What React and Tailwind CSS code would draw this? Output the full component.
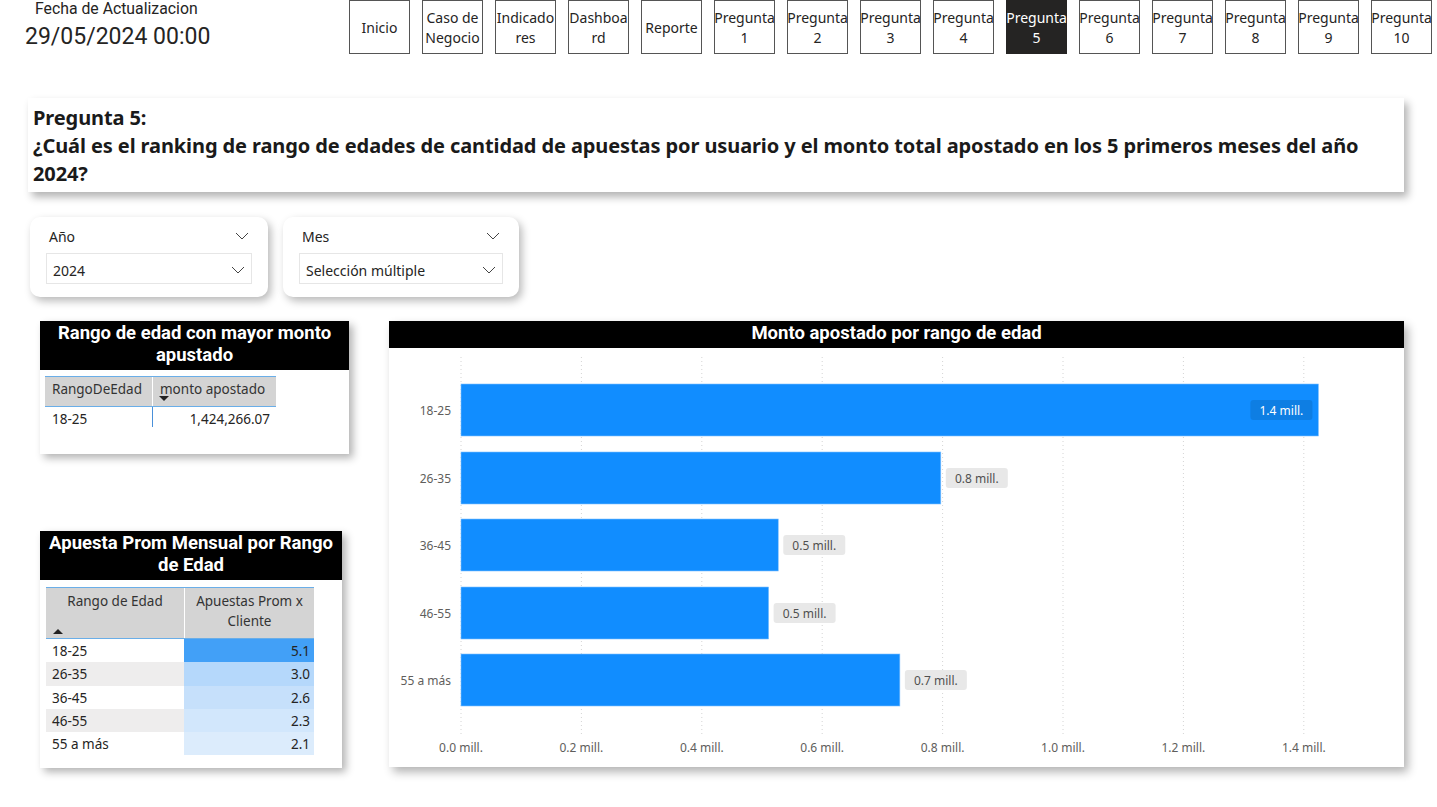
import React from 'react';

const navItems = [
  ['Inicio'],
  ['Caso de', 'Negocio'],
  ['Indicado', 'res'],
  ['Dashboa', 'rd'],
  ['Reporte'],
  ['Pregunta', '1'],
  ['Pregunta', '2'],
  ['Pregunta', '3'],
  ['Pregunta', '4'],
  ['Pregunta', '5'],
  ['Pregunta', '6'],
  ['Pregunta', '7'],
  ['Pregunta', '8'],
  ['Pregunta', '9'],
  ['Pregunta', '10'],
];

const promRows = [
  { rango: '18-25', val: '5.1', bg: 'bg-[#42a0f7]', alt: false },
  { rango: '26-35', val: '3.0', bg: 'bg-[#b5d8fb]', alt: true },
  { rango: '36-45', val: '2.6', bg: 'bg-[#c6e0fb]', alt: false },
  { rango: '46-55', val: '2.3', bg: 'bg-[#d2e7fc]', alt: true },
  { rango: '55 a más', val: '2.1', bg: 'bg-[#dcecfc]', alt: false },
];

const bars = [
  { label: '18-25', value: 1.424266, text: '1.4 mill.' },
  { label: '26-35', value: 0.797, text: '0.8 mill.' },
  { label: '36-45', value: 0.527, text: '0.5 mill.' },
  { label: '46-55', value: 0.511, text: '0.5 mill.' },
  { label: '55 a más', value: 0.729, text: '0.7 mill.' },
];

const seg = { fontFamily: '"Noto Sans", "Open Sans", sans-serif' };
const din = { fontFamily: 'Roboto, "Noto Sans", sans-serif' };

function Chevron({ className }) {
  return (
    <svg className={className} width="14" height="8" viewBox="0 0 14 8" fill="none">
      <path d="M1 1l6 6 6-6" stroke="#444" strokeWidth="1" />
    </svg>
  );
}

function Slicer({ title, value, width }) {
  return (
    <div className={`${width} h-[80px] bg-white rounded-[10px] shadow-[3px_4px_8px_rgba(0,0,0,0.28)] px-[16px] pt-[9px]`}>
      <div className="flex items-center justify-between pl-[3px] pr-[3px] h-[20px]">
        <span className="text-[14px] text-[#252423]">{title}</span>
        <Chevron />
      </div>
      <div className="mt-[7px] h-[31px] border border-[#e6e6e6] flex items-center justify-between pl-[6px] pr-[6px] pt-[3px]">
        <span className="text-[14px] text-[#252423]">{value}</span>
        <Chevron />
      </div>
    </div>
  );
}

function BarChart() {
  const scale = 602;
  const x0 = 72;
  const ys = [36, 104, 171, 239, 306];
  const ticks = [0, 0.2, 0.4, 0.6, 0.8, 1.0, 1.2, 1.4];
  return (
    <svg width="1015" height="419" viewBox="0 0 1015 419" style={seg}>
      {ticks.map((t) => (
        <line key={t} x1={x0 + t * scale} x2={x0 + t * scale} y1="9" y2="388" stroke="#d4d4d4" strokeDasharray="1 3" />
      ))}
      {bars.map((b, i) => {
        const w = b.value * scale;
        const cy = ys[i] + 26;
        const inside = i === 0;
        const bx = inside ? x0 + w - 68 : x0 + w + 5;
        return (
          <g key={b.label}>
            <rect x={x0} y={ys[i]} width={w} height="52" fill="#118dff" stroke="#7fc0ff" strokeWidth="0.6" />
            <text x="62" y={cy + 5} textAnchor="end" fontSize="12" fill="#605e5c">{b.label}</text>
            <rect x={bx} y={cy - 10} width="62" height="20" rx="3" fill={inside ? '#0e7ee3' : '#e8e8e8'} />
            <text x={bx + 31} y={cy + 5} textAnchor="middle" fontSize="12" fill={inside ? '#ffffff' : '#505050'}>{b.text}</text>
          </g>
        );
      })}
      {ticks.map((t) => (
        <text key={t} x={x0 + t * scale} y="404" textAnchor="middle" fontSize="12" fill="#605e5c">
          {t.toFixed(1)} mill.
        </text>
      ))}
    </svg>
  );
}

export default function App() {
  return (
    <div className="w-[1437px] h-[807px] bg-white overflow-hidden relative" style={seg}>
      {/* Top bar */}
      <div className="flex h-[56px]">
        <div className="w-[349px] shrink-0 pl-[25px]">
          <div className="pl-[10px] text-[15.8px] leading-[18px] text-[#252423]" style={din}>Fecha de Actualizacion</div>
          <div className="mt-[3px] text-[23px] leading-[32px] text-[#252423]" style={din}>29/05/2024 00:00</div>
        </div>
        <div className="flex gap-[12px]">
          {navItems.map((n, i) => {
            const active = i === 9;
            return (
              <div
                key={i}
                className={`w-[61px] h-[54px] border flex flex-col items-center justify-center pt-[2px] text-[14px] leading-[20px] ${
                  active ? 'bg-[#252423] border-[#252423] text-white' : 'bg-white border-[#555] text-[#252423]'
                }`}
              >
                {n.map((l, k) => (
                  <span key={k} className="whitespace-nowrap">{l}</span>
                ))}
              </div>
            );
          })}
        </div>
      </div>

      {/* Question */}
      <div className="ml-[28px] mt-[42px] w-[1376px] h-[94px] bg-white shadow-[4px_5px_8px_rgba(0,0,0,0.3)] pl-[5px] pt-[6px]">
        <div className="text-[20px] leading-[28px] font-bold text-[#1a1a1a] tracking-[-0.1px]">
          Pregunta 5:
          <br />
          ¿Cuál es el ranking de rango de edades de cantidad de apuestas por usuario y el monto total apostado en los 5 primeros meses del año 2024?
        </div>
      </div>

      {/* Slicers */}
      <div className="flex gap-[15px] ml-[30px] mt-[25px]">
        <Slicer title="Año" value="2024" width="w-[238px]" />
        <Slicer title="Mes" value="Selección múltiple" width="w-[236px]" />
      </div>

      {/* Lower area */}
      <div className="flex mt-[24px]">
        <div className="ml-[40px] w-[349px] flex flex-col">
          {/* Table 1 */}
          <div className="w-[309px] h-[133px] bg-white shadow-[4px_4px_8px_rgba(0,0,0,0.3)]">
            <div className="h-[49px] bg-black text-white text-center text-[18.5px] leading-[22px] font-bold pt-[1px]" style={din}>
              Rango de edad con mayor monto
              <br />
              apustado
            </div>
            <div className="ml-[5px] mt-[6px] w-[231px]">
              <div className="flex h-[30px] bg-[#d4d4d4] border-t border-[#6aaee8] text-[13.5px] leading-[18px] text-[#333]">
                <div className="w-[107px] pl-[7px] pt-[3px]">RangoDeEdad</div>
                <div className="w-[124px] border-l border-white pl-[7px] pt-[3px] relative">
                  monto apostado
                  <span className="absolute left-[6px] top-[19px] w-0 h-0 border-l-[5px] border-r-[5px] border-t-[5px] border-l-transparent border-r-transparent border-t-[#222]"></span>
                </div>
              </div>
              <div className="flex h-[24px] border-t border-[#6aaee8] text-[13.5px] leading-[24px] text-[#252423]">
                <div className="w-[107px] pl-[7px]">18-25</div>
                <div className="w-[124px] border-l border-[#4a90d9] text-right pr-[6px] h-[20px]">1,424,266.07</div>
              </div>
            </div>
          </div>

          {/* Table 2 */}
          <div className="mt-[77px] w-[302px] h-[237px] bg-white shadow-[4px_4px_8px_rgba(0,0,0,0.3)]">
            <div className="h-[49px] bg-black text-white text-center text-[18.5px] leading-[22px] font-bold pt-[1px]" style={din}>
              Apuesta Prom Mensual por Rango
              <br />
              de Edad
            </div>
            <div className="ml-[6px] mt-[7px] w-[268px] text-[13.5px] text-[#252423]">
              <div className="flex h-[52px] bg-[#d4d4d4] border-t border-[#6aaee8] border-b text-[#333] leading-[20px]">
                <div className="w-[138px] text-center pt-[3px] relative">
                  Rango de Edad
                  <span className="absolute left-[7px] top-[41px] w-0 h-0 border-l-[5px] border-r-[5px] border-b-[5px] border-l-transparent border-r-transparent border-b-[#222]"></span>
                </div>
                <div className="w-[130px] border-l border-white text-center pt-[3px]">
                  Apuestas Prom x
                  <br />
                  Cliente
                </div>
              </div>
              {promRows.map((r) => (
                <div key={r.rango} className="flex h-[23.3px] leading-[24px]">
                  <div className={`w-[138px] pl-[6px] ${r.alt ? 'bg-[#eeeded]' : 'bg-white'}`}>{r.rango}</div>
                  <div className={`w-[130px] text-right pr-[4px] ${r.bg}`}>{r.val}</div>
                </div>
              ))}
            </div>
          </div>
        </div>

        {/* Chart */}
        <div className="w-[1015px] h-[446px] bg-white shadow-[4px_5px_9px_rgba(0,0,0,0.3)]">
          <div className="h-[27px] bg-black text-white text-center text-[18.5px] leading-[25px] font-bold" style={din}>
            Monto apostado por rango de edad
          </div>
          <BarChart />
        </div>
      </div>
    </div>
  );
}
